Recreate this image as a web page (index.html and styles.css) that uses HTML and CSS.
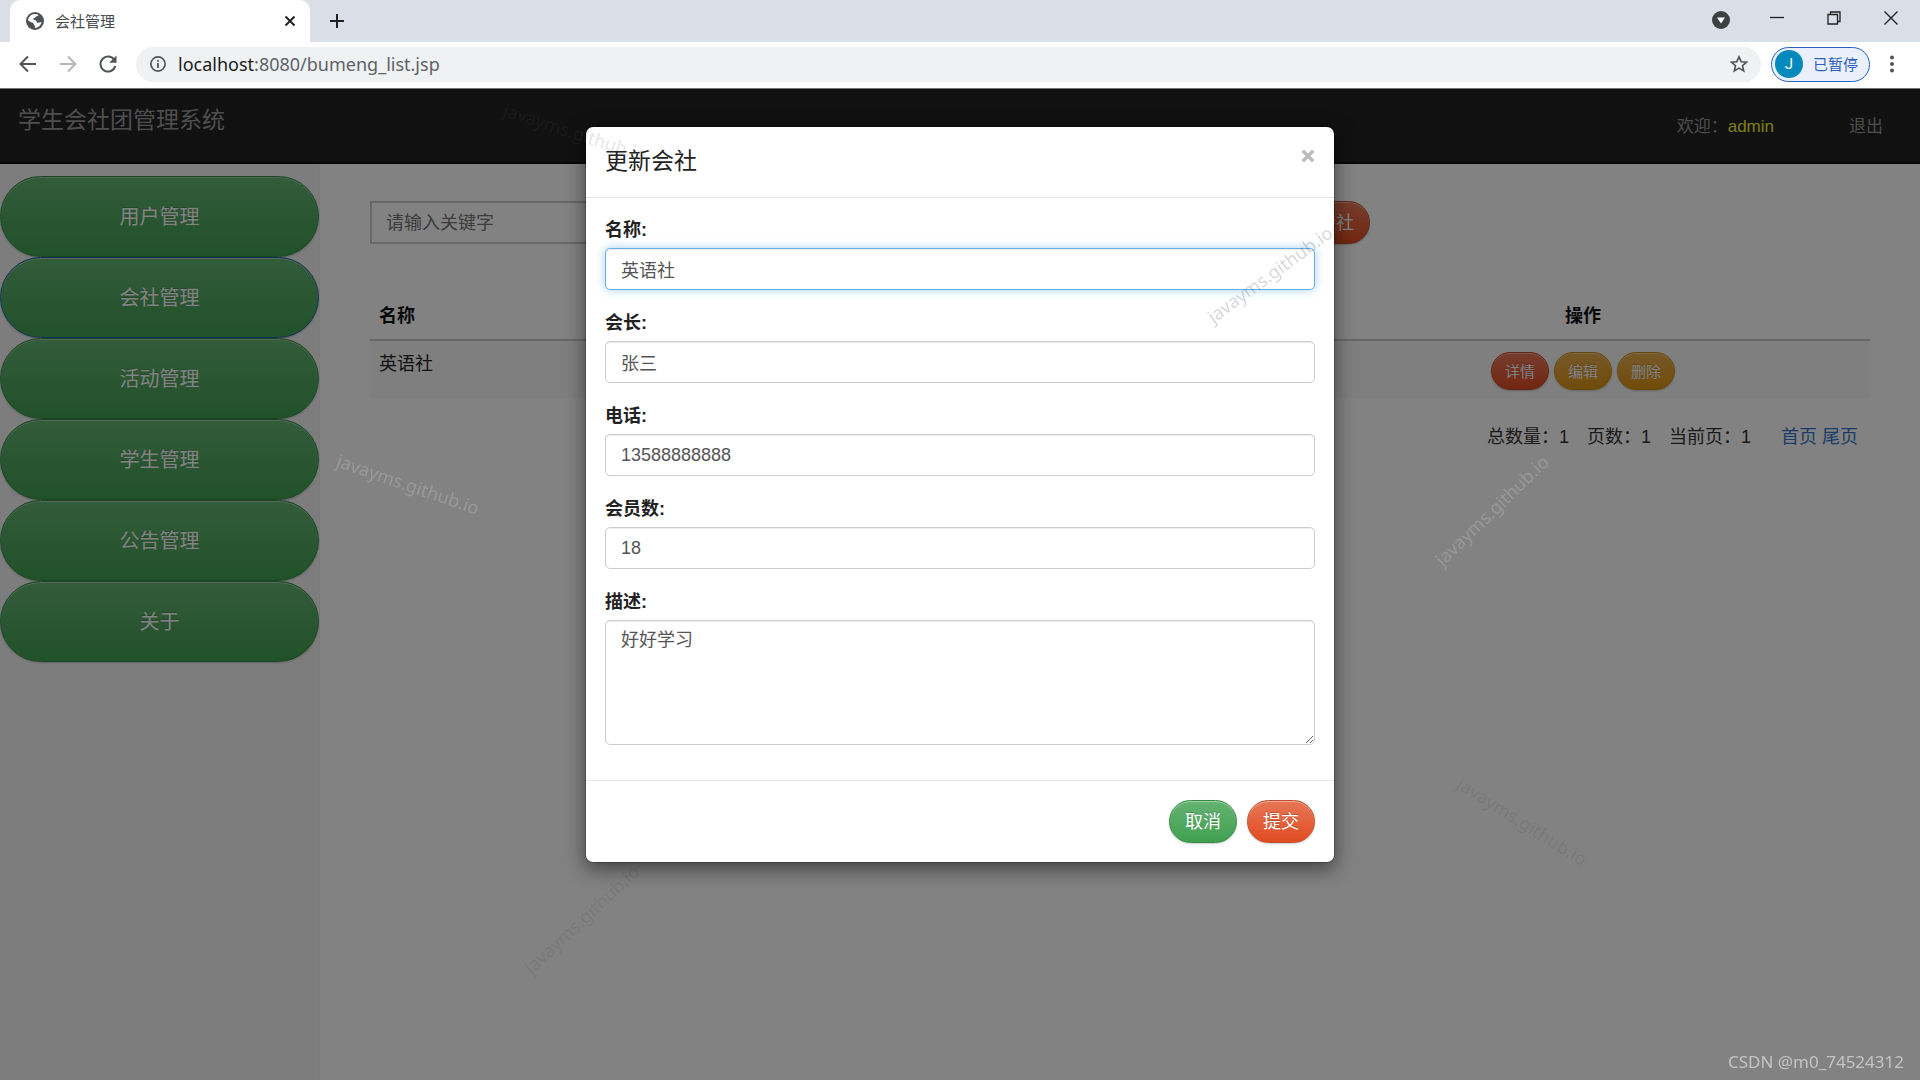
FILE: index.html
```html
<!DOCTYPE html>
<html lang="zh-CN">
<head>
<meta charset="utf-8">
<title>会社管理</title>
<link rel="stylesheet" href="styles.css">
</head>
<body>
<div class="browser">
  <div class="tabstrip">
    <div class="tab">
      <svg class="tab-icon" viewBox="0 0 18 18" aria-hidden="true"><circle cx="9" cy="9" r="9" fill="#4d5156"/><path fill="#fff" d="M9 2c1.500 0 2.600.3 3.500.9-.4 1-1.300 1.300-2.300 1.500-.8.2-.7 1.400-1.600 1.600-.8.2-1.500.4-1.300 1.300.2.900 2 .6 2.700 1.200.8.7.3 1.600 1.200 2 1.100.5 2.600-.2 4.500-.6-.9 3.400-3.400 5.800-6.700 6.100.1-1.100.2-2-.6-2.600-.7-.5-.5-1.700-1.300-2.300C5.900 10.300 3.800 9.800 2 8.300 2.400 4.700 5.400 2 9 2z"/></svg>
      <span class="tab-title">会社管理</span>
      <button class="icon-btn" type="button" aria-label="关闭标签页"><svg width="12" height="12" viewBox="0 0 12 12"><path d="M1.500 1.500l9 9m0-9l-9 9" stroke="#202124" stroke-width="2"/></svg></button>
    </div>
    <button class="icon-btn new-tab" type="button" aria-label="新标签页"><svg width="16" height="16" viewBox="0 0 16 16"><path d="M8 1v14M1 8h14" stroke="#202124" stroke-width="2"/></svg></button>
    <div class="window-controls">
      <button class="icon-btn tab-search" type="button" aria-label="标签搜索"><svg width="18" height="18" viewBox="0 0 18 18"><circle cx="9" cy="9" r="9" fill="#3c4043"/><path d="M5 6.500h8l-4 6z" fill="#fff"/></svg></button>
      <button class="icon-btn" type="button" aria-label="最小化"><svg width="14" height="14" viewBox="0 0 14 14"><path d="M0 6.500h14" stroke="#202124" stroke-width="1.300"/></svg></button>
      <button class="icon-btn" type="button" aria-label="还原"><svg width="14" height="14" viewBox="0 0 14 14"><path d="M1 3.500h9.500V13H1zM3.500 3.500V1H13v9.500h-2.500" fill="none" stroke="#202124" stroke-width="1.300"/></svg></button>
      <button class="icon-btn" type="button" aria-label="关闭"><svg width="14" height="14" viewBox="0 0 14 14"><path d="M.5.5l13 13m0-13l-13 13" stroke="#202124" stroke-width="1.400"/></svg></button>
    </div>
  </div>
  <div class="toolbar">
    <button class="icon-btn" type="button" aria-label="后退"><svg width="18" height="18" viewBox="0 0 18 18"><path d="M17 9H2m7-7.500L1.500 9 9 16.500" fill="none" stroke="#505357" stroke-width="2"/></svg></button>
    <button class="icon-btn" type="button" aria-label="前进"><svg width="18" height="18" viewBox="0 0 18 18"><path d="M1 9h15M9 1.500L16.500 9 9 16.500" fill="none" stroke="#b5b7ba" stroke-width="2"/></svg></button>
    <button class="icon-btn" type="button" aria-label="刷新"><svg width="18" height="18" viewBox="0 0 18 18"><path d="M15.500 5.200A7.500 7.500 0 1 0 16.300 11" fill="none" stroke="#505357" stroke-width="2"/><path d="M17.500.5v7.300h-7.300z" fill="#505357"/></svg></button>
    <div class="address">
      <svg width="16" height="16" viewBox="0 0 16 16" aria-hidden="true"><circle cx="8" cy="8" r="7.100" fill="none" stroke="#505357" stroke-width="1.700"/><path d="M8 7v5M8 4v1.800" stroke="#505357" stroke-width="1.800"/></svg>
      <span class="url"><span class="host">localhost</span>:8080/bumeng_list.jsp</span>
      <button class="icon-btn" type="button" aria-label="收藏"><svg width="18" height="18" viewBox="0 0 18 18"><path d="M9 1.800l2.200 4.900 5.300.5-4 3.500 1.200 5.200L9 13.100l-4.700 2.800 1.200-5.200-4-3.500 5.300-.5z" fill="none" stroke="#505357" stroke-width="1.600"/></svg></button>
    </div>
    <button class="profile" type="button"><span class="avatar">J</span>已暂停</button>
    <button class="icon-btn" type="button" aria-label="菜单"><svg width="6" height="18" viewBox="0 0 6 18"><circle cx="3" cy="2.500" r="2" fill="#505357"/><circle cx="3" cy="9" r="2" fill="#505357"/><circle cx="3" cy="15.500" r="2" fill="#505357"/></svg></button>
  </div>
</div>

<div class="page">
  <header class="navbar">
    <a class="brand" href="#">学生会社团管理系统</a>
    <div class="user"><span>欢迎：<span class="user-name">admin</span></span><a class="logout" href="#">退出</a></div>
  </header>
  <div class="layout">
    <nav class="sidebar">
      <button class="btn green menu" type="button">用户管理</button>
      <button class="btn green menu current" type="button">会社管理</button>
      <button class="btn green menu" type="button">活动管理</button>
      <button class="btn green menu" type="button">学生管理</button>
      <button class="btn green menu" type="button">公告管理</button>
      <button class="btn green menu" type="button">关于</button>
    </nav>
    <main class="content">
      <form class="search">
        <input class="keyword" type="text" placeholder="请输入关键字" aria-label="关键字">
        <button class="btn red" type="button">添加会社</button>
      </form>
      <table class="list">
        <thead><tr><th>名称</th><th class="actions">操作</th></tr></thead>
        <tbody>
          <tr><td>英语社</td><td class="actions"><div class="row-actions"><button class="btn red small" type="button">详情</button><button class="btn yellow small" type="button">编辑</button><button class="btn yellow small" type="button">删除</button></div></td></tr>
        </tbody>
      </table>
      <div class="pager"><span>总数量：1</span><span>页数：1</span><span>当前页：1</span><span class="pager-links"><a href="#">首页</a> <a href="#">尾页</a></span></div>
    </main>
  </div>

  <div class="backdrop">
    <div class="modal" role="dialog" aria-labelledby="modal-title">
      <div class="modal-header">
        <h1 class="modal-title" id="modal-title">更新会社</h1>
        <button class="icon-btn" type="button" aria-label="关闭对话框"><svg width="14" height="14" viewBox="0 0 12 12"><path d="M1.500 1.500l9 9m0-9l-9 9" stroke="#bcbcbc" stroke-width="3"/></svg></button>
      </div>
      <form class="modal-body">
        <div class="field"><label for="name">名称:</label><input class="control" id="name" type="text" value="英语社" autofocus></div>
        <div class="field"><label for="leader">会长:</label><input class="control" id="leader" type="text" value="张三"></div>
        <div class="field"><label for="phone">电话:</label><input class="control" id="phone" type="text" value="13588888888"></div>
        <div class="field"><label for="members">会员数:</label><input class="control" id="members" type="text" value="18"></div>
        <div class="field"><label for="desc">描述:</label><textarea class="control area" id="desc">好好学习</textarea></div>
      </form>
      <div class="modal-footer">
        <button class="btn green" type="button">取消</button>
        <button class="btn red" type="button">提交</button>
      </div>
    </div>
  </div>
</div>

<div class="watermarks" aria-hidden="true">
  <span class="mark mark-a">javayms.github.io</span>
  <span class="mark mark-b">javayms.github.io</span>
  <span class="mark mark-c">javayms.github.io</span>
  <span class="mark mark-d">javayms.github.io</span>
  <span class="mark mark-e">javayms.github.io</span>
  <span class="mark mark-f">javayms.github.io</span>
  <span class="credit">CSDN @m0_74524312</span>
</div>
</body>
</html>
```
FILE: styles.css
```css
* { box-sizing: border-box; }

body {
  margin: 0;
  min-height: 100vh;
  display: flex;
  flex-direction: column;
  position: relative;
  overflow: hidden;
  font: 18px/25px "Liberation Sans", "Noto Sans CJK SC", sans-serif;
  color: #333;
}

button, input, textarea { font: inherit; }
a { text-decoration: none; }

.icon-btn {
  display: flex;
  padding: 0;
  border: 0;
  background: none;
}

/* browser frame */
.browser { font-family: "Noto Sans", "Noto Sans CJK SC", sans-serif; }

.tabstrip {
  display: flex;
  align-items: center;
  height: 42px;
  padding-left: 10px;
  background: #dadee6;
}
.tab {
  display: flex;
  align-items: center;
  gap: 11px;
  width: 300px;
  height: 42px;
  padding: 0 14px 0 16px;
  border-radius: 10px 10px 0 0;
  background: #fff;
}
.tab-icon { width: 18px; height: 18px; }
.tab-title { flex: 1; font-size: 15px; color: #45484c; }
.new-tab { margin-left: 19px; }
.window-controls {
  display: flex;
  align-items: center;
  gap: 43px;
  margin-left: auto;
  padding: 0 22px 6px 0;
}
.tab-search { margin: 4px -3px 0 0; }

.toolbar {
  display: flex;
  align-items: center;
  gap: 22px;
  height: 47px;
  padding: 0 25px 2px 19px;
  border-bottom: 1px solid #777;
  background: #fff;
}
.address {
  flex: 1;
  display: flex;
  align-items: center;
  gap: 12px;
  height: 35px;
  margin-right: -12px;
  margin-left: -3px;
  padding: 0 13px 0 14px;
  border-radius: 18px;
  background: #eff1f3;
}
.url { flex: 1; color: #5f6368; }
.host { color: #1a1b1d; }
.profile {
  display: flex;
  align-items: center;
  gap: 10px;
  height: 35px;
  margin-right: -3px;
  padding: 0 11px 0 3px;
  border: 1px solid #2560c0;
  border-radius: 18px;
  background: #eaf0fb;
  font-size: 15px;
  color: #2c62bd;
}
.avatar {
  width: 28px;
  height: 28px;
  border-radius: 50%;
  background: #0489bd;
  font-family: Roboto, sans-serif;
  color: #fff;
  line-height: 28px;
  text-align: center;
}

/* application page */
.page {
  flex: 1;
  display: flex;
  flex-direction: column;
  position: relative;
  background: #fff;
}
.navbar {
  display: flex;
  justify-content: space-between;
  height: 75px;
  padding: 19px 37px 0 18px;
  border-bottom: 2px solid #101010;
  background: #222;
}
.brand { font-size: 23px; color: #999; }
.user {
  display: flex;
  gap: 75px;
  padding-top: 6px;
  font-size: 17px;
  color: #999;
}
.user-name { color: #f4f428; }
.logout { color: #999; }

.layout { flex: 1; display: flex; }
.sidebar {
  flex: none;
  width: 320px;
  padding-top: 12px;
  border-right: 1px solid #f2f2f2;
  background: #f5f5f5;
}
.content { flex: 1; padding: 37px 50px 0; }

.btn {
  height: 43px;
  padding: 2px 15px 0;
  border: 1px solid;
  border-radius: 22px;
  color: #fff;
  line-height: 25px;
  text-shadow: 0 -1px 0 rgba(0, 0, 0, .2);
  box-shadow: inset 0 1px 0 rgba(255, 255, 255, .4), 0 1px 2px rgba(0, 0, 0, .2);
}
.green { border-color: #338a42; background: linear-gradient(#64b372, #41a051); }
.red { border-color: #c04a2a; background: linear-gradient(#e67757, #e24c22); }
.yellow { border-color: #cf900f; background: linear-gradient(#e8ae50, #dc9414); }
.small { height: 38px; padding: 0 13px; border-radius: 19px; font-size: 15px; }
.menu {
  display: block;
  width: 100%;
  height: 81px;
  border-radius: 41px;
  font-size: 20px;
}
.current { border-color: #225fae; }

.search { display: flex; gap: 20px; }
.keyword {
  flex: 0 1 876px;
  height: 43px;
  padding: 2px 14px 0;
  border: 2px solid #ccc;
  background: #fff;
}
.keyword::placeholder { color: #777; opacity: 1; }

.list { width: 100%; margin-top: 48px; border-collapse: collapse; }
.list th {
  height: 48px;
  padding: 2px 9px 0;
  border-bottom: 2px solid #ccc;
  color: #111;
  text-align: left;
}
.list td {
  height: 58px;
  padding: 11px 9px 9px;
  background: #f9f9f9;
  color: #222;
  vertical-align: top;
}
.list .actions { width: 574px; text-align: center; }
.row-actions { display: flex; justify-content: center; gap: 5px; }

.pager {
  display: flex;
  justify-content: flex-end;
  gap: 18px;
  padding: 26px 12px 0 0;
}
.pager-links { margin-left: 12px; }
.pager-links a { color: #3377c8; }

/* dialog */
.backdrop {
  position: absolute;
  inset: 0;
  padding-top: 37px;
  background: rgba(0, 0, 0, .49);
}
.modal {
  width: 750px;
  margin: 0 auto;
  border: 1px solid rgba(0, 0, 0, .2);
  border-radius: 8px;
  background: #fff;
  background-clip: padding-box;
  box-shadow: 0 6px 19px rgba(0, 0, 0, .5);
}
.modal-header {
  display: flex;
  justify-content: space-between;
  align-items: flex-start;
  height: 71px;
  padding: 22px 19px 0;
  border-bottom: 1px solid #e5e5e5;
}
.modal-title { margin: 0; font-size: 23px; font-weight: 400; color: #222; }
.modal-body { padding: 20px 19px 15px; }
.field { margin-bottom: 21px; }
.field:last-child { margin-bottom: 20px; }
.field label { display: block; margin-bottom: 5px; font-weight: 700; color: #222; }
.control {
  display: block;
  width: 100%;
  height: 42px;
  padding: 7px 15px;
  border: 1px solid #ccc;
  border-radius: 5px;
  background: #fff;
  color: #555;
  outline: 0;
  box-shadow: inset 0 1px 1px rgba(0, 0, 0, .08);
}
.control:focus {
  border-color: #66afe9;
  box-shadow: inset 0 1px 1px rgba(0, 0, 0, .08), 0 0 10px rgba(102, 175, 233, .6);
}
.area { height: 125px; resize: vertical; }
.modal-footer {
  display: flex;
  justify-content: flex-end;
  gap: 10px;
  padding: 19px;
  border-top: 1px solid #e5e5e5;
}

/* marks scattered over the whole window */
.watermarks {
  position: absolute;
  inset: 0;
  pointer-events: none;
  font-family: "Noto Sans", sans-serif;
}
.mark {
  position: absolute;
  width: 160px;
  text-align: center;
  color: rgba(0, 0, 0, .07);
}
.mark-a { left: 328px; top: 472px; transform: rotate(19deg); color: rgba(255, 255, 255, .18); }
.mark-b { left: 495px; top: 120px; transform: rotate(18deg); color: rgba(80, 80, 80, .15); }
.mark-c { left: 1190px; top: 262px; transform: rotate(-36deg); color: rgba(0, 0, 0, .16); }
.mark-d { left: 1412px; top: 498px; transform: rotate(-44deg); color: rgba(255, 255, 255, .18); }
.mark-e { left: 1442px; top: 809px; transform: rotate(32deg); }
.mark-f { left: 502px; top: 907px; transform: rotate(-43deg); }
.credit {
  position: absolute;
  right: 16px;
  bottom: 6px;
  font-size: 17px;
  color: #c4c4c4;
}
```
